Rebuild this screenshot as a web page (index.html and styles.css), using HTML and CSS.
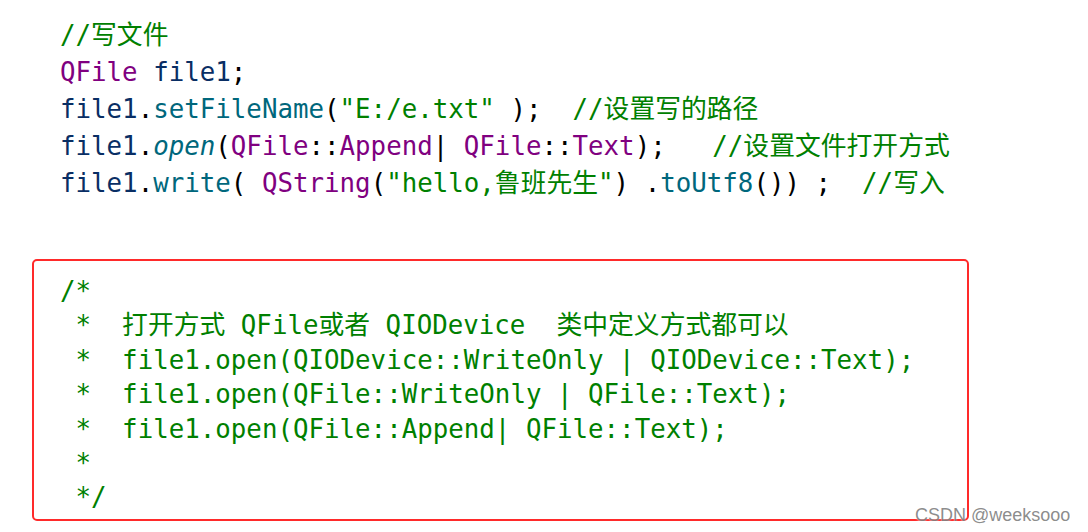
FILE: index.html
```html
<!DOCTYPE html>
<html lang="zh">
<head>
<meta charset="utf-8">
<link rel="stylesheet" href="styles.css">
</head>
<body>
<div class="page">
  <div class="code">
    <div class="line"><span class="cm">//写文件</span></div>
    <div class="line"><span class="ty">QFile</span> <span class="var">file1</span>;</div>
    <div class="line"><span class="var">file1</span>.<span class="fn">setFileName</span>(<span class="str">"E:/e.txt"</span> );  <span class="cm">//设置写的路径</span></div>
    <div class="line"><span class="var">file1</span>.<span class="fn it">open</span>(<span class="ty">QFile</span>::<span class="ty">Append</span>| <span class="ty">QFile</span>::<span class="ty">Text</span>);   <span class="cm">//设置文件打开方式</span></div>
    <div class="line"><span class="var">file1</span>.<span class="fn">write</span>( <span class="ty">QString</span>(<span class="str">"hello,鲁班先生"</span>) .<span class="fn">toUtf8</span>()) ;  <span class="cm">//写入</span></div>
  </div>
  <div class="box">
    <div class="bline">/*</div>
    <div class="bline"> *  打开方式 QFile或者 QIODevice  类中定义方式都可以</div>
    <div class="bline"> *  file1.open(QIODevice::WriteOnly | QIODevice::Text);</div>
    <div class="bline"> *  file1.open(QFile::WriteOnly | QFile::Text);</div>
    <div class="bline"> *  file1.open(QFile::Append| QFile::Text);</div>
    <div class="bline"> *</div>
    <div class="bline"> */</div>
  </div>
  <div class="watermark">CSDN @weeksooo</div>
</div>
</body>
</html>
```

FILE: styles.css
```css
html, body {
  margin: 0;
  padding: 0;
  background: #ffffff;
}

.page {
  position: relative;
  width: 1088px;
  height: 532px;
  overflow: hidden;
}

.code {
  padding: 17px 0 0 60px;
  font-family: "DejaVu Sans Mono", "Noto Sans CJK SC", monospace;
  font-size: 25.8px;
  color: #000000;
}

.line {
  height: 37px;
  line-height: 37px;
  white-space: pre;
}

.cm, .str { color: #008000; }
.ty { color: #800080; }
.var { color: #092e64; }
.fn { color: #00677c; }
.it { font-style: italic; }

.box {
  box-sizing: border-box;
  margin: 57px 0 0 32px;
  width: 937px;
  height: 262px;
  border: 2px solid #ff2a2a;
  border-radius: 5px;
  padding: 13px 0 0 26px;
  font-family: "DejaVu Sans Mono", "Noto Sans CJK SC", monospace;
  font-size: 25.8px;
  color: #008000;
}

.bline {
  height: 34.4px;
  line-height: 34.4px;
  white-space: pre;
}

.watermark {
  position: absolute;
  left: 915px;
  top: 505px;
  font-family: "Liberation Sans", Arial, sans-serif;
  font-size: 18px;
  line-height: 21px;
  color: rgba(110, 110, 110, 0.8);
  text-shadow: 0 0 2px #ffffff;
}
```
